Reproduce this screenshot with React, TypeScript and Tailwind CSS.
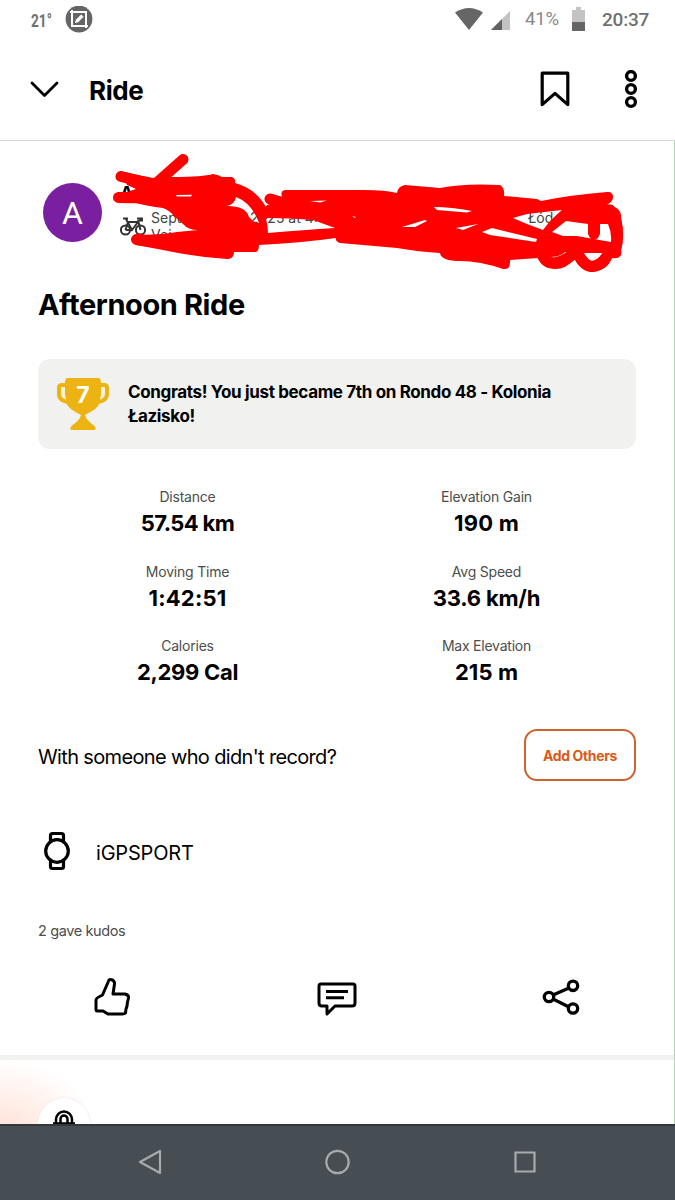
import React from "react";

const stats = [
  ["Distance", "57.54 km", "tracking-[-0.6px]"],
  ["Elevation Gain", "190 m", "tracking-[0.2px]"],
  ["Moving Time", "1:42:51", "tracking-[0.2px]"],
  ["Avg Speed", "33.6 km/h", "tracking-[-0.2px]"],
  ["Calories", "2,299 Cal", "tracking-[-0.3px]"],
  ["Max Elevation", "215 m", "tracking-[0.1px]"],
];

function StatusBar() {
  return (
    <div className="flex h-10 items-center justify-between pr-[25px] pl-[31px] text-[#707070]">
      <div className="flex items-center gap-[15px]">
        <span className="w-[19px] origin-left scale-x-[0.72] text-[19px] leading-none font-bold whitespace-nowrap font-['Roboto',sans-serif]">21°</span>
        <svg width="28" height="28" viewBox="0 0 28 28" fill="none">
          <circle cx="14" cy="13" r="13.4" fill="#656565" />
          <path d="M5 7h16v16M7 5v16h16" stroke="white" strokeWidth="2" transform="translate(0 -1)" />
          <path d="m10 17 .8-3.2 5.4-5.4 2.4 2.4-5.4 5.4z" fill="white" />
        </svg>
      </div>
      <div className="flex items-center font-['Roboto',sans-serif] text-[19px]">
        <svg className="-mt-0.5" width="28" height="22" viewBox="0 0 28 22"><path d="M0 4.5Q14-4.5 28 4.5L14 22Z" fill="#666" /></svg>
        <svg className="ml-2" width="19" height="19" viewBox="0 0 19 19"><path d="M0 19 19 0V19Z" fill="#c3c3c3" /><path d="M0 19 11 8V19Z" fill="#626262" /></svg>
        <span className="ml-[15px] w-[35px] text-[18.5px] tracking-[-0.1px] text-[#888]">41%</span>
        <svg className="-mt-0.5 ml-3" width="13" height="24" viewBox="0 0 13 24"><path d="M4 0h5v3h4v12H0V3h4z" fill="#c3c3c3" /><path d="M0 15h13v9H0z" fill="#656565" /></svg>
        <span className="ml-[17px] w-[48px] font-medium tracking-[-0.2px]">20:37</span>
      </div>
    </div>
  );
}

function Header() {
  return (
    <header className="flex h-[101px] items-center border-b border-[#d8d8d8] pr-[37px] pl-[29px]">
      <svg width="32" height="20" viewBox="0 0 32 20" fill="none" stroke="black" strokeWidth="2.8" strokeLinecap="round" strokeLinejoin="round"><path d="M3 3 15.5 15.5 28 3" /></svg>
      <h1 className="ml-7 flex-1 text-[26px] font-bold tracking-[-0.4px]">Ride</h1>
      <svg width="30" height="38" viewBox="0 0 30 38" fill="none" stroke="black" strokeWidth="3.2" strokeLinejoin="round"><path d="M2.2 2.2H27.8V33.6L15 22.4 2.2 33.6Z" /></svg>
      <svg className="ml-[54px]" width="14" height="40" viewBox="0 0 14 40" fill="none" stroke="black" strokeWidth="3.4"><circle cx="7" cy="6" r="4.4" /><circle cx="7" cy="19" r="4.4" /><circle cx="7" cy="32" r="4.4" /></svg>
    </header>
  );
}

function Scribble() {
  return (
    <svg className="absolute top-0 left-0" width="674" height="140" viewBox="0 141 674 140" fill="none">
      <path
        fill="#fe0000"
        fillRule="evenodd"
        d="M120 171 Q136 175 153 178 L173 177 Q203 177 213 174 Q219 175 222 177H232Q236 179 235 183 Q258 189 268 211L270 208 280 203 268 201 272 194 282 197 Q280 191 285 190H363Q386 190 397 193 398 186 405 185L440 188Q464 183 500 185 505 188 504 196L537 199 541 201Q570 195 607 192C616 191 614 203 607 204Q622 208 621 217 625 236 621 250C623 257 617 259 612 258Q607 271 592 272 580 270 575 259 566 269 555 269 543 269 538 258L510 260Q511 270 503 269 480 261 460 261 441 261 440 253 420 252 397 248L340 243Q335 241 336 238 300 243 259 245 259 253 254 252L234 252Q234 259 227 259 195 257 163 250L136 245V234Q150 236 177 232L198 230Q188 230 183 224 176 218 173 215 170 211 163 208 147 206 136 203L118 202Q114 198 119 192L127 192 136 189 127 185Z
        M236 197Q235 204 227 206 246 206 249 217L254 222 259 223Q252 203 236 197Z
        M268 218Q290 218 313 220L335 228Q304 230 268 233Q268 226 266 219Z
        M176 195 192 194.7 191 196.5 177 196.5Z
        M310 201 327 200.5 320 202.5Z
        M402 227 425 220 427 221 415 227Z
        M434 207Q451 207 472 211L467 212.5 437 210Z
        M456 228 478 224 463 230Z
        M482 232 492 228 537 239 536 242 490 235Z
        M513 218 527 214 562 210Q551 219 543 230L527 224Z
        M552 232 566 221 588 224V234Q594 242 600 234V224H608Q612 233 611 242L577 236H563Z
        M550 257Q560 257 565 252L569 252Q560 260 550 257Z
        M584 253H613Q605 261 593 262 587 259 584 253Z
        M352 216 356 217 355 218Z"
      />
      <g stroke="#fe0000" strokeWidth="11" strokeLinecap="round" strokeLinejoin="round">
        <path d="M121 176.5 153 184 M183 159.500 152 187 M118.500 197.500 150 198 M136.500 239.500 163 243 M270 199 290 205 M270 210 300 212 M229 183 229 198 M252 239 252 246 M594 228V234 M541 252Q545 264 555 263 566 261 575 252 M577 252Q583 266 592 266.500 603 265 609 252 M610 210Q622 228 615 252" />
      </g>
    </svg>
  );
}

function Profile() {
  return (
    <section className="relative flex h-[140px] pt-[42px] pl-[43px]">
      <div className="flex size-[59px] items-center justify-center rounded-full bg-[#7a1fa0] font-['Roboto',sans-serif] text-[32px] text-white">A</div>
      <div className="ml-[18px]">
        <div className="-mt-[2px] text-[18px] leading-[24px] font-bold">A</div>
        <div className="flex pt-[4px] text-[14px] leading-[18px] text-[#444]">
          <svg className="mt-[8px] mr-1" width="27" height="19" viewBox="0 0 27 19" fill="none" stroke="#333" strokeWidth="2">
            <circle cx="5.500" cy="13" r="4.600" /><circle cx="20.500" cy="13" r="4.600" />
            <path d="M3 1.500H8M6 2l6 11L18 5H8L5.500 13M12 13H5.500M17 1.500h5v2h-3M18 3l2.500 10" />
          </svg>
          <span className="w-[99px]">Sept</span>
          <span className="w-[278px]">2025 at 4:1</span>
          <span>Łód</span>
        </div>
        <div className="-mt-[10px] ml-[31px] text-[14px] leading-[18px] text-[#444]">Voi</div>
      </div>
      <Scribble />
    </section>
  );
}

function Trophy() {
  return (
    <div className="relative h-[53px] w-[52px]">
      <svg width="52" height="53" viewBox="0 0 52 53">
        <path d="M8 7H5Q2 7 2 10v6q0 8 13 8M44 7h3Q50 7 50 10v6q0 8-13 8" fill="none" stroke="#edb313" strokeWidth="4" />
        <path d="M10 0H42Q44 1 44 4V17C44 27 40 31 28 37Q29 42 37 47.500 41 52 36 52H16Q11 52 15 47.500 23 42 24 37C12 31 8 27 8 17V4Q8 1 10 0Z" fill="#edb313" />
        <path d="M7.500 9h-3q-.5 9 4.500 13-1.500-6-1.500-13M44.500 9h3q.5 9-4.500 13 1.500-6 1.500-13" fill="#fbf3d5" />
      </svg>
      <span className="absolute inset-x-0 top-[5px] text-center text-[23px] leading-[25px] font-bold text-white">7</span>
    </div>
  );
}

export default function App() {
  return (
    <main className="flex h-[1200px] w-[675px] flex-col overflow-hidden bg-white font-['Inter',sans-serif] text-black">
      <StatusBar />
      <Header />
      <div className="flex h-[983px] flex-col border-r border-[#bdcfbd]">
        <Profile />
        <h2 className="ml-[38px] h-[78px] pt-[4px] text-[29px] leading-[40px] font-bold tracking-[-0.4px]">Afternoon Ride</h2>
        <div className="mx-[38px] flex h-[90px] items-center rounded-[12px] bg-[#f1f1ef] pl-[19px]">
          <Trophy />
          <p className="ml-[19px] text-[17px] leading-[24px] font-bold tracking-[-0.35px]">Congrats! You just became 7th on Rondo 48 - Kolonia<br />Łazisko!</p>
        </div>
        <div className="mx-[38px] mt-[38px] grid h-[224px] grid-cols-2 grid-rows-3 text-center">
          {stats.map(([label, value, spacing]) => (
            <div key={label}>
              <div className="text-[14px] leading-[20px] tracking-[-0.22px] text-[#4d4d4d]">{label}</div>
              <div className={"mt-[2px] text-[22px] leading-[28px] font-bold " + spacing}>{value}</div>
            </div>
          ))}
        </div>
        <div className="mx-[38px] mt-[18px] flex h-[52px] items-center justify-between">
          <span className="pt-[3px] text-[20px] tracking-[-0.65px]">With someone who didn't record?</span>
          <button className="h-[52px] w-[112px] rounded-[13px] border-2 border-[#cf6330] text-[14px] font-bold tracking-[-0.35px] text-[#db5a17]">Add Others</button>
        </div>
        <div className="mt-[50px] ml-[44px] flex h-[40px] items-center">
          <svg width="26" height="40" viewBox="0 0 26 40" fill="none" stroke="black" strokeWidth="3.2"><circle cx="13" cy="20" r="11.3" /><path d="M6.500 11V4.500Q6.500 2.500 8.500 2.500h9q2 0 2 2V11M6.500 29v6.500q0 2 2 2h9q2 0 2-2V29" /></svg>
          <span className="ml-[26px] pt-[3px] text-[20px] tracking-[-0.2px]">iGPSPORT</span>
        </div>
        <p className="mt-[49px] ml-[38px] text-[14.500px] leading-[22px] tracking-[-0.38px] text-[#4d4d4d]">2 gave kudos</p>
        <div className="mt-[34px] flex h-[42px] items-center justify-between pr-[94px] pl-[93px]">
          <svg width="38" height="42" viewBox="0 0 38 42" fill="none" stroke="black" strokeWidth="3" strokeLinejoin="round"><path d="m9.500 19 6.500-15q1-1 3.500 0 2.500 2 2 4L20 18h12q4 1 3.500 4l-1 4-.5 4-1 3-.5 4q-1 1-3 1H15l-5-3H4q-1 0-1-2V24Q3 22 9.500 19Z" /></svg>
          <svg width="40" height="42" viewBox="0 0 40 42" fill="none" stroke="black" strokeWidth="3" strokeLinejoin="round"><path d="M4 8H36Q38 8 38 10V27q0 3-3 3H18L10 38V30H5q-3 0-3-3V10Q2 8 4 8Z" /><path d="M9 15.500H31M9 21.800H27" /></svg>
          <svg width="38" height="42" viewBox="0 0 38 42" fill="none" stroke="black" strokeWidth="3.300"><circle cx="7" cy="21" r="4.700" /><circle cx="31" cy="9.800" r="4.700" /><circle cx="31" cy="32.500" r="4.700" /><path d="m11 19 16-7M11 23l16 8" /></svg>
        </div>
        <div className="mt-[37px] h-[5px] shrink-0 bg-[#f1f1ef]" />
        <div className="flex h-[64px] items-start bg-[radial-gradient(ellipse_95px_75px_at_0px_74px,#ffe0d5_0%,#fff0ea_50%,#ffffff_100%)] pt-[38px] pl-[38px]">
          <div className="flex h-[52px] w-[52px] justify-center rounded-full bg-white pt-[12px] shadow-[0_0_2px_#ddd]">
            <svg width="22" height="26" viewBox="0 0 22 26" fill="none" stroke="black" strokeWidth="2.500"><path d="M3 14V9.500a8 8 0 0 1 16 0V14M7.500 14V9a3.500 3.500 0 0 1 7 0v5M1 13.500h20V24H1z" /></svg>
          </div>
        </div>
      </div>
      <nav className="z-10 flex h-[76px] shrink-0 items-start justify-between border-t-2 border-[#32383c] bg-[#464d53] px-[138px] pt-[23px]">
        <svg width="24" height="26" viewBox="0 0 24 26" fill="none" stroke="#a6abb0" strokeWidth="2.200" strokeLinejoin="round"><path d="M22 2V24L2 13Z" /></svg>
        <svg width="26" height="26" viewBox="0 0 26 26" fill="none" stroke="#a6abb0" strokeWidth="2.200"><circle cx="12.5" cy="13" r="11.200" /></svg>
        <svg className="mt-px" width="24" height="24" viewBox="0 0 24 24" fill="none" stroke="#a6abb0" strokeWidth="2.200"><path d="M2.5 2.500H21.500V21.500H2.500z" /></svg>
      </nav>
    </main>
  );
}
